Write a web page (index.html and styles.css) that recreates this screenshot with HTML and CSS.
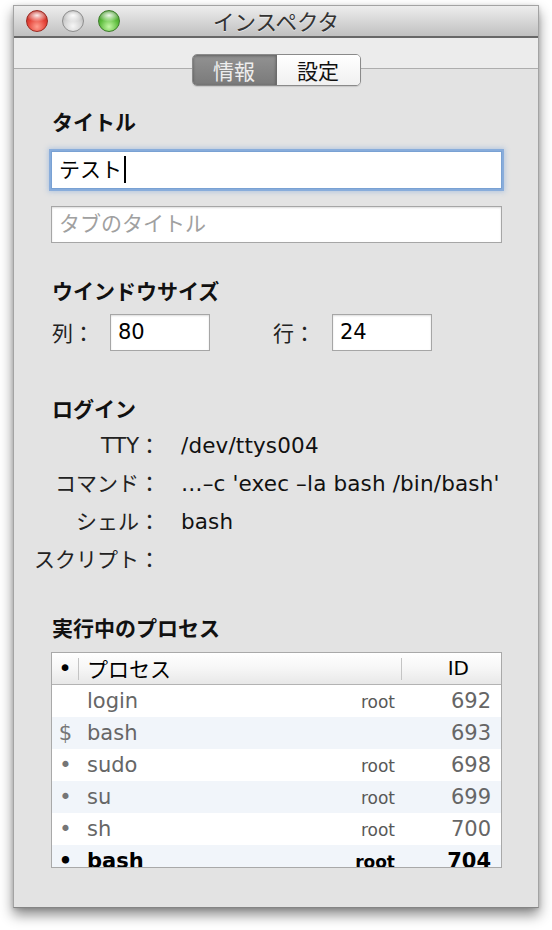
FILE: index.html
```html
<!DOCTYPE html>
<html lang="ja">
<head>
<meta charset="utf-8">
<title>インスペクタ</title>
<link rel="stylesheet" href="styles.css">
</head>
<body>
<div class="window">
  <div class="titlebar">
    <div class="lights">
      <span class="light red"></span>
      <span class="light gray"></span>
      <span class="light green"></span>
    </div>
    <div class="title">インスペクタ</div>
    <div></div>
  </div>
  <div class="toolbar">
    <div class="seg">
      <span class="seg-item on">情報</span>
      <span class="seg-item">設定</span>
    </div>
  </div>
  <div class="content">
    <div class="heading">タイトル</div>
    <div class="field focus">テスト<span class="caret"></span></div>
    <div class="field ph">タブのタイトル</div>

    <div class="heading h2">ウインドウサイズ</div>
    <div class="size-row">
      <span class="size-label">列：</span>
      <div class="field small">80</div>
      <span class="size-label l2">行：</span>
      <div class="field small">24</div>
    </div>

    <div class="heading h3">ログイン</div>
    <div class="info">
      <div class="lbl">TTY：</div><div class="val">/dev/ttys004</div>
      <div class="lbl">コマンド：</div><div class="val">…–c 'exec –la bash /bin/bash'</div>
      <div class="lbl">シェル：</div><div class="val">bash</div>
      <div class="lbl">スクリプト：</div><div class="val"></div>
    </div>

    <div class="heading h4">実行中のプロセス</div>
    <div class="table">
      <div class="thead">
        <div class="th dot">•</div>
        <i class="sep"></i>
        <div class="th name">プロセス</div>
        <i class="sep"></i>
        <div class="th id">ID</div>
      </div>
      <div class="tr"><div class="td mark"></div><div class="td name"><span>login</span><span class="user">root</span></div><div class="td id">692</div></div>
      <div class="tr"><div class="td mark">$</div><div class="td name"><span>bash</span><span class="user"></span></div><div class="td id">693</div></div>
      <div class="tr"><div class="td mark">•</div><div class="td name"><span>sudo</span><span class="user">root</span></div><div class="td id">698</div></div>
      <div class="tr"><div class="td mark">•</div><div class="td name"><span>su</span><span class="user">root</span></div><div class="td id">699</div></div>
      <div class="tr"><div class="td mark">•</div><div class="td name"><span>sh</span><span class="user">root</span></div><div class="td id">700</div></div>
      <div class="tr cur"><div class="td mark">•</div><div class="td name"><span>bash</span><span class="user">root</span></div><div class="td id">704</div></div>
    </div>
  </div>
</div>
</body>
</html>
```

FILE: styles.css
```css
* { box-sizing: border-box; }
html, body { margin: 0; padding: 0; }
body {
  width: 552px;
  height: 930px;
  overflow: hidden;
  background: #ffffff;
  font-family: "DejaVu Sans", "Noto Sans CJK JP", sans-serif;
}

.window {
  margin: 5px 0 0 13px;
  width: 526px;
  height: 903px;
  border: 1px solid #a3a3a3;
  border-bottom-color: #858585;
  background: #e3e3e3;
  box-shadow: 0 7px 12px rgba(0, 0, 0, 0.45), 0 1px 4px rgba(0, 0, 0, 0.15);
  display: flex;
  flex-direction: column;
}

/* title bar */
.titlebar {
  height: 32px;
  flex: none;
  display: grid;
  grid-template-columns: 1fr auto 1fr;
  align-items: center;
  background: linear-gradient(#ededed, #c0c0c0);
  border-bottom: 2px solid #676767;
}
.lights {
  display: flex;
  gap: 14px;
  padding-left: 12px;
}
.light {
  width: 22px;
  height: 22px;
  border-radius: 50%;
  display: block;
}
.red {
  border: 1px solid #9b2a22;
  background:
    radial-gradient(ellipse 55% 32% at 50% 22%, rgba(255,255,255,0.9), rgba(255,255,255,0) 100%),
    radial-gradient(circle at 50% 78%, #ff9f90 0%, #e6453a 48%, #a5150f 100%);
}
.gray {
  border: 1px solid #8e8e8e;
  background:
    radial-gradient(ellipse 55% 32% at 50% 22%, rgba(255,255,255,0.95), rgba(255,255,255,0) 100%),
    radial-gradient(circle at 50% 75%, #f6f6f6 0%, #d2d2d2 50%, #9a9a9a 100%);
}
.green {
  border: 1px solid #3e7d2c;
  background:
    radial-gradient(ellipse 55% 32% at 50% 22%, rgba(255,255,255,0.9), rgba(255,255,255,0) 100%),
    radial-gradient(circle at 50% 78%, #c4f7a6 0%, #5dbd3d 50%, #2f7a1d 100%);
}
.title {
  font-family: "Noto Sans CJK JP", sans-serif;
  font-size: 21.5px;
  line-height: 30px;
  color: #333333;
  text-shadow: 0 1px 0 rgba(255, 255, 255, 0.5);
}

/* toolbar with segmented control */
.toolbar {
  height: 31px;
  flex: none;
  background: #ececec;
  border-bottom: 1px solid #adadad;
  display: flex;
  justify-content: center;
  align-items: flex-start;
  padding-top: 16px;
}
.seg {
  position: relative;
  z-index: 1;
  display: flex;
  height: 32px;
  border: 1px solid #8a8a8a;
  border-radius: 5px;
  overflow: hidden;
  box-shadow: 0 1px 1px rgba(0, 0, 0, 0.12);
  font-family: "Noto Sans CJK JP", sans-serif;
}
.seg-item {
  width: 83px;
  line-height: 30px;
  text-align: center;
  font-size: 21px;
  color: #111;
  background: linear-gradient(#ffffff, #f0f0f0);
}
.seg-item.on {
  width: 84px;
  color: #eeeeee;
  background: linear-gradient(#929292, #7a7a7a);
  box-shadow: inset 0 1px 3px rgba(0, 0, 0, 0.35);
  border-right: 1px solid #6c6c6c;
}

/* content */
.content {
  padding: 38px 36px 0 37px;
}
.heading {
  font-family: "Noto Sans CJK JP", sans-serif;
  font-weight: 700;
  font-size: 21px;
  line-height: 28px;
  height: 28px;
  padding-left: 1px;
  color: #111;
}
.h2 { margin-top: 33px; }
.h3 { margin-top: 43px; }
.h4 { margin-top: 34px; }

.field {
  height: 38px;
  border: 1px solid #a6a6a6;
  background: #ffffff;
  font-size: 21px;
  line-height: 36px;
  padding-left: 7px;
  color: #000;
  box-shadow: inset 0 1px 2px rgba(0, 0, 0, 0.14);
  white-space: nowrap;
}
.focus {
  margin-top: 16px;
  border-color: #79a1d3;
  box-shadow: 0 0 0 2px rgba(122, 164, 218, 0.8), 0 0 5px 3px rgba(122, 164, 218, 0.45);
}
.caret {
  display: inline-block;
  width: 2px;
  height: 27px;
  background: #000;
  vertical-align: middle;
  margin-left: 2px;
  margin-top: -3px;
}
.ph {
  margin-top: 17px;
  height: 37px;
  line-height: 35px;
  color: #a0a0a0;
}

.size-row {
  margin-top: 10px;
  display: flex;
  align-items: center;
  height: 37px;
}
.size-label {
  width: 59px;
  padding-left: 1px;
  font-family: "Noto Sans CJK JP", sans-serif;
  font-size: 21px;
  line-height: 37px;
  color: #222;
}
.size-label.l2 {
  margin-left: 62px;
  width: 60px;
}
.field.small {
  width: 100px;
  height: 37px;
  line-height: 35px;
}

.info {
  margin-top: 5px;
  margin-left: -37px;
  display: grid;
  grid-template-columns: 146px 1fr;
  column-gap: 21px;
  grid-auto-rows: 38px;
  font-size: 21px;
  line-height: 38px;
}
.lbl {
  text-align: right;
  white-space: nowrap;
  color: #222;
}
.val {
  white-space: nowrap;
  color: #111;
  font-size: 21.5px;
  letter-spacing: 0.15px;
}

/* process table */
.table {
  margin-top: 11px;
  height: 216px;
  border: 1px solid #a9a9a9;
  background: #ffffff;
  overflow: hidden;
}
.thead {
  height: 32px;
  display: grid;
  grid-template-columns: 26px 1px 322px 1px 98px;
  align-items: center;
  background: linear-gradient(#ffffff 0%, #f6f6f6 50%, #e8e8e8 100%);
  border-bottom: 1px solid #b3b3b3;
  color: #000;
}
.sep {
  display: block;
  height: 22px;
  background: #c4c4c4;
}
.th {
  line-height: 31px;
  font-size: 21px;
  white-space: nowrap;
}
.th.dot {
  text-align: center;
  font-size: 23px;
}
.th.name {
  padding-left: 8px;
  font-family: "Noto Sans CJK JP", sans-serif;
}
.th.id {
  text-align: right;
  padding-right: 31px;
  font-size: 20px;
}
.tr {
  display: grid;
  grid-template-columns: 27px 323px 98px;
  height: 32px;
  line-height: 32px;
  font-size: 21px;
  color: #666666;
}
.tr:nth-child(odd) {
  background: #f1f5fa;
}
.td { white-space: nowrap; }
.td.mark {
  text-align: center;
  color: #767676;
}
.td.name {
  display: flex;
  justify-content: space-between;
  align-items: baseline;
  padding: 0 7px 0 8px;
}
.user {
  font-size: 17px;
  color: #585858;
}
.td.id {
  text-align: right;
  padding-right: 9px;
}
.tr.cur {
  color: #000;
  font-weight: 700;
}
.tr.cur .td.mark,
.tr.cur .user {
  color: #000;
}
```
